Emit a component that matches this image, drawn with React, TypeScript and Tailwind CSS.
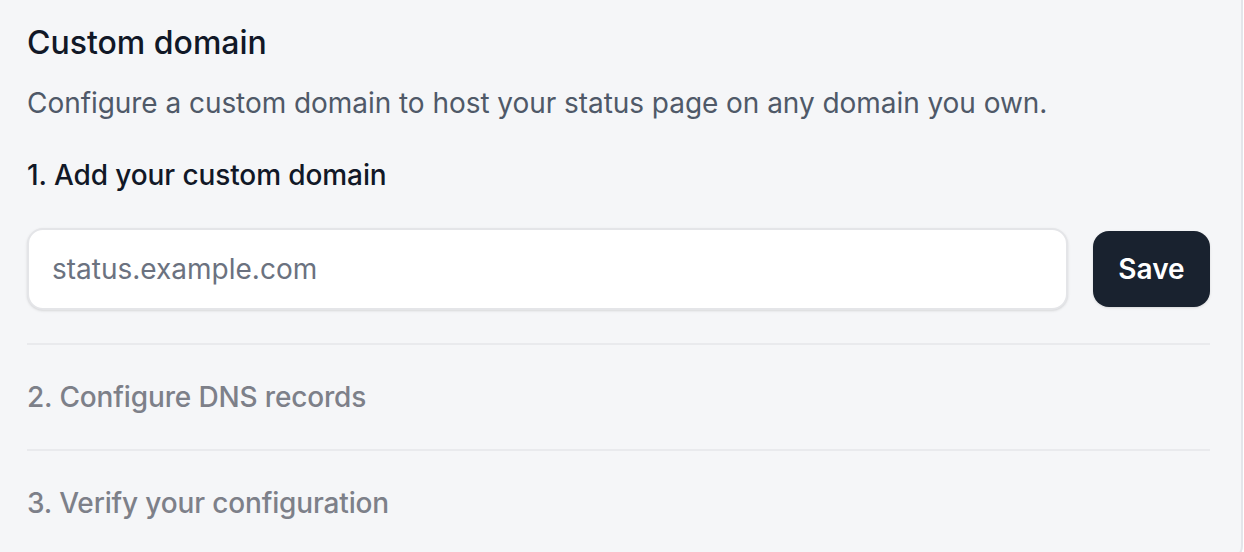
export default function App() {
  return (
    <div className="h-[552px] w-[1244px] overflow-hidden bg-white font-['Inter',sans-serif]">
      <div className="h-[560px] w-[1243px] rounded-br-[14px] border-r-2 border-b-2 border-[#e3e5ea] bg-[#f5f6f8] pl-[27px] pr-[31px] pt-[23px]">
        <h2 className="text-[32px] font-medium leading-[40px] text-[#111827]">Custom domain</h2>
        <p className="mt-[20px] text-[28px] leading-[40px] tracking-[-0.05px] text-[#4f5968]">
          Configure a custom domain to host your status page on any domain you own.
        </p>

        <div className="pb-[33px]">
          <h3 className="mt-[32px] text-[28px] font-medium leading-[40px] tracking-[-0.1px] text-[#111827]">1. Add your custom domain</h3>
          <div className="mt-[33px] flex items-center gap-[25px]">
            <input
              type="text"
              placeholder="status.example.com"
              className="h-[82px] flex-1 rounded-[16px] border-2 border-[#e4e5e8] bg-white px-[23px] text-[28px] text-[#111827] shadow-sm outline-none placeholder:text-[#6b7280]"
            />
            <button className="h-[76px] w-[117px] rounded-[16px] bg-[#19222f] text-[28px] font-semibold text-white shadow-sm">
              Save
            </button>
          </div>
        </div>

        <div className="border-t-2 border-[#e9eaed] py-[32px]">
          <h3 className="text-[28px] font-medium leading-[40px] tracking-[-0.15px] text-[#7d8089]">2. Configure DNS records</h3>
        </div>
        <div className="border-t-2 border-[#e9eaed] pt-[32px]">
          <h3 className="text-[28px] font-medium leading-[40px] tracking-[-0.15px] text-[#7d8089]">3. Verify your configuration</h3>
        </div>
      </div>
    </div>
  );
}
